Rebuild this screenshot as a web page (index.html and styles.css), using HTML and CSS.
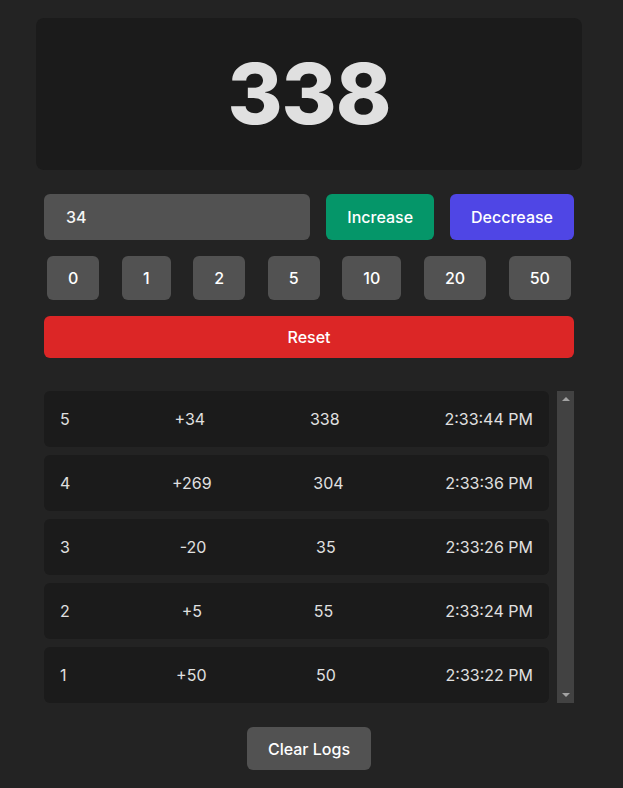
FILE: index.html
```html
<!DOCTYPE html>
<html>
<head>
<meta charset="utf-8">
<link rel="stylesheet" href="styles.css">
</head>
<body>
<div class="app">
  <div class="display"><span class="count">338</span></div>
  <div class="controls">
    <div class="input-row">
      <div class="input">34</div>
      <button class="btn btn-inc">Increase</button>
      <button class="btn btn-dec">Deccrease</button>
    </div>
    <div class="presets">
      <button class="btn btn-grey preset">0</button>
      <button class="btn btn-grey preset">1</button>
      <button class="btn btn-grey preset">2</button>
      <button class="btn btn-grey preset">5</button>
      <button class="btn btn-grey preset">10</button>
      <button class="btn btn-grey preset">20</button>
      <button class="btn btn-grey preset">50</button>
    </div>
    <button class="btn btn-reset">Reset</button>
    <div class="logs">
      <div class="log-list">
        <div class="log"><span>5</span><span>+34</span><span>338</span><span>2:33:44 PM</span></div>
        <div class="log"><span>4</span><span>+269</span><span>304</span><span>2:33:36 PM</span></div>
        <div class="log"><span>3</span><span>-20</span><span>35</span><span>2:33:26 PM</span></div>
        <div class="log"><span>2</span><span>+5</span><span>55</span><span>2:33:24 PM</span></div>
        <div class="log"><span>1</span><span>+50</span><span>50</span><span>2:33:22 PM</span></div>
      </div>
      <div class="scrollbar">
        <span class="arrow up"></span>
        <span class="arrow down"></span>
      </div>
    </div>
    <div class="footer">
      <button class="btn btn-grey btn-clear">Clear Logs</button>
    </div>
  </div>
</div>
</body>
</html>
```
FILE: styles.css
```css
* { box-sizing: border-box; }
html, body {
  margin: 0;
  padding: 0;
  background: #232323;
  font-family: Inter, "Noto Sans", sans-serif;
  color: #e5e5e5;
}
.app {
  padding: 18px 41px 18px 36px;
}
.display {
  height: 152px;
  background: #1b1b1b;
  border-radius: 8px;
  display: flex;
  align-items: center;
  justify-content: center;
}
.count {
  font-size: 84px;
  font-weight: 800;
  color: #e0e0e0;
  line-height: 1;
  letter-spacing: -1px;
}
.controls {
  padding: 24px 8px 0 8px;
}
.input-row {
  display: flex;
  gap: 16px;
  height: 46px;
}
.input {
  flex: 1;
  background: #525252;
  border-radius: 6px;
  display: flex;
  align-items: center;
  padding-left: 22px;
  font-size: 16px;
  font-weight: 500;
  color: #f5f5f5;
}
.btn {
  border: none;
  font-family: inherit;
  font-size: 16px;
  font-weight: 500;
  color: #ffffff;
  border-radius: 6px;
  cursor: pointer;
}
.btn-inc {
  background: #059669;
  padding: 0 21px;
}
.btn-dec {
  background: #4f46e5;
  padding: 0 21px;
}
.presets {
  display: flex;
  justify-content: space-between;
  padding: 0 3px;
  margin-top: 16px;
}
.btn-grey {
  background: #525252;
}
.preset {
  height: 44px;
  padding: 0 21px;
}
.btn-reset {
  display: block;
  width: 100%;
  height: 42px;
  margin-top: 16px;
  background: #dc2626;
}
.logs {
  margin-top: 33px;
  display: flex;
  gap: 8px;
  height: 312px;
}
.log-list {
  flex: 1;
  display: flex;
  flex-direction: column;
  gap: 8px;
}
.log {
  height: 56px;
  background: #1b1b1b;
  border-radius: 6px;
  display: flex;
  align-items: center;
  justify-content: space-between;
  padding: 0 16px;
  font-size: 16px;
  color: #e0e0e0;
}
.scrollbar {
  width: 17px;
  background: #424242;
  display: flex;
  flex-direction: column;
  justify-content: space-between;
  align-items: center;
  padding: 6px 0;
}
.arrow {
  width: 0;
  height: 0;
  border-left: 4px solid transparent;
  border-right: 4px solid transparent;
}
.arrow.up {
  border-bottom: 4px solid #a3a3a3;
}
.arrow.down {
  border-top: 4px solid #a3a3a3;
}
.footer {
  display: flex;
  justify-content: center;
  margin-top: 24px;
}
.btn-clear {
  height: 43px;
  padding: 0 21px;
}
```
